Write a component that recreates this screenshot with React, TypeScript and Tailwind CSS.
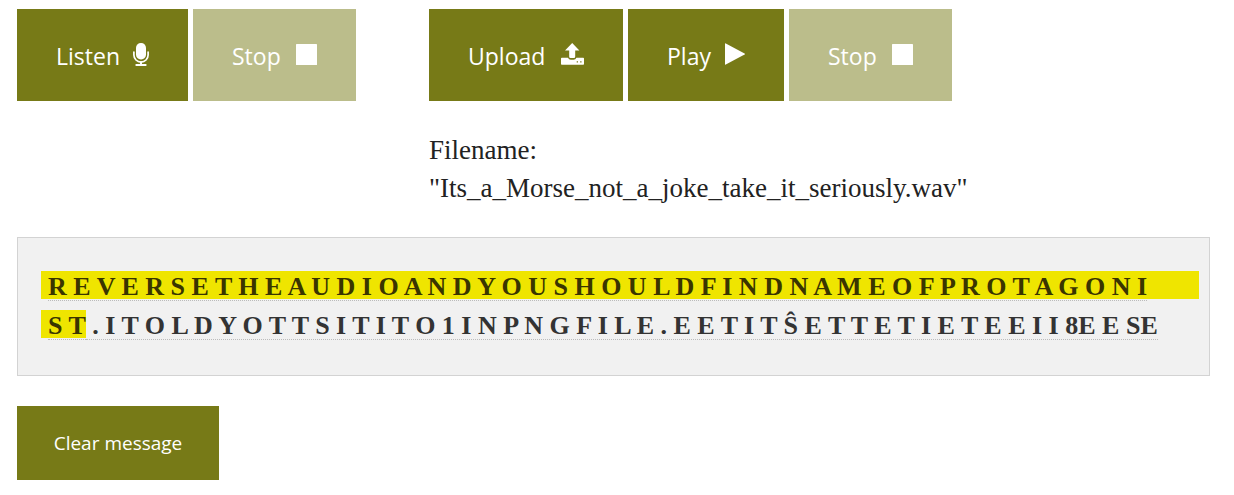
import type { ReactNode } from 'react';

function MicIcon() {
  return (
    <svg className="h-[23px] w-4 shrink-0" viewBox="0 0 16 23" fill="none" aria-hidden="true">
      <rect x="3" y="0" width="10" height="16.500" rx="4.800" fill="currentColor" />
      <path d="M.9 9v3a7.100 7.100 0 0 0 14.200 0V9" stroke="currentColor" strokeWidth="1.700" strokeLinecap="round" />
      <path d="M8 19v3M3.300 22h9.400" stroke="currentColor" strokeWidth="1.900" strokeLinecap="round" />
    </svg>
  );
}

function UploadIcon() {
  return (
    <svg className="h-[22px] w-[23px] shrink-0" viewBox="0 0 23 22" fill="currentColor" aria-hidden="true">
      <path d="M11.200 0 18.400 7.500H14.200v6.200q0 1.300-1.300 1.300H9.500q-1.300 0-1.300-1.300V7.500H4z" />
      <path
        fillRule="evenodd"
        d="M.8 14.800H7q.8 2 2.800 2h2.800q2 0 2.800-2h6.800q.8 0 .8.800v5.400q0 .8-.8.800H.8q-.8 0-.8-.8v-5.400q0-.8.800-.8zM15.700 18.200v1.200h1.300v-1.200zM19.200 18.200v1.200h1.300v-1.200z"
      />
    </svg>
  );
}

function PlayIcon() {
  return (
    <svg className="h-[22px] w-5 shrink-0" viewBox="0 0 20 22" fill="currentColor" aria-hidden="true">
      <path d="M0 .8Q0 0 .8.400L19.600 10.500q.7.500 0 1L.8 21.600Q0 22 0 21.200z" />
    </svg>
  );
}

function StopIcon() {
  return (
    <svg className="h-[21px] w-[21px] shrink-0" viewBox="0 0 21 21" fill="currentColor" aria-hidden="true">
      <rect width="21" height="21" rx=".6" />
    </svg>
  );
}

type ActionProps = { label: string; icon: ReactNode; width: string; disabled?: boolean };

function Action({ label, icon, width, disabled }: ActionProps) {
  return (
    <button
      type="button"
      disabled={disabled}
      className={`flex h-[92px] items-center justify-between bg-[#777a17] px-[39px] text-[23px] text-white disabled:bg-[#bbbd8b] ${width}`}
    >
      <span className="pt-0.5 leading-8">{label}</span>
      <span className="flex h-6 items-center pb-0.5">{icon}</span>
    </button>
  );
}

export default function App() {
  return (
    <main className="min-h-screen bg-white pt-[9px] pr-6 pb-4 pl-[17px] font-['Open_Sans','Noto_Sans',sans-serif]">
      <div className="flex gap-[73px]">
        <section className="flex gap-[5px]">
          <Action label="Listen" icon={<MicIcon />} width="w-[171px]" />
          <Action label="Stop" icon={<StopIcon />} width="w-[163px]" disabled />
        </section>
        <section>
          <div className="flex gap-[5px]">
            <Action label="Upload" icon={<UploadIcon />} width="w-[194px]" />
            <Action label="Play" icon={<PlayIcon />} width="w-[156px]" />
            <Action label="Stop" icon={<StopIcon />} width="w-[163px]" disabled />
          </div>
          <p className="mt-[30px] font-['Liberation_Serif',serif] text-[27px] leading-[38px] text-[#222]">
            Filename:
            <br />
            "Its_a_Morse_not_a_joke_take_it_seriously.wav"
          </p>
        </section>
      </div>

      <div className="mt-[30px] border border-[#d3d3d3] bg-[#f1f1f1] pt-[33px] pr-[10px] pb-[26px] pl-[23px] font-['Liberation_Serif',serif] text-[26px] leading-[31px] font-bold whitespace-nowrap text-[#333]">
        <div className="flex h-[39px] items-start bg-[linear-gradient(#efe500,#efe500)] bg-[length:100%_28px] bg-no-repeat pl-[7px] text-[#3a3500]">
          <span className="h-[30px] border-b border-dotted border-[#bbb]">
            R E V E R S E T H E A U D I O A N D Y O U S H O U L D F I N D N A M E O F P R O T A G O N I
          </span>
        </div>
        <div className="flex h-[39px] items-start">
          <mark className="h-7 bg-[#efe500] pl-[7px] text-[#3a3500]">
            <span className="block h-[30px] border-b border-dotted border-[#bbb]">S T</span>
          </mark>
          <span className="h-[30px] border-b border-dotted border-[#bbb] whitespace-pre">
            {' . I T O L D Y O T T S I T I T O 1 I N P N G F I L E . E E T I T Ŝ E T T E T I E T E E I I 8E E SE'}
          </span>
        </div>
      </div>

      <button type="button" className="mt-[30px] h-[74px] w-[202px] bg-[#777a17] text-[19px] text-white">
        Clear message
      </button>
    </main>
  );
}
